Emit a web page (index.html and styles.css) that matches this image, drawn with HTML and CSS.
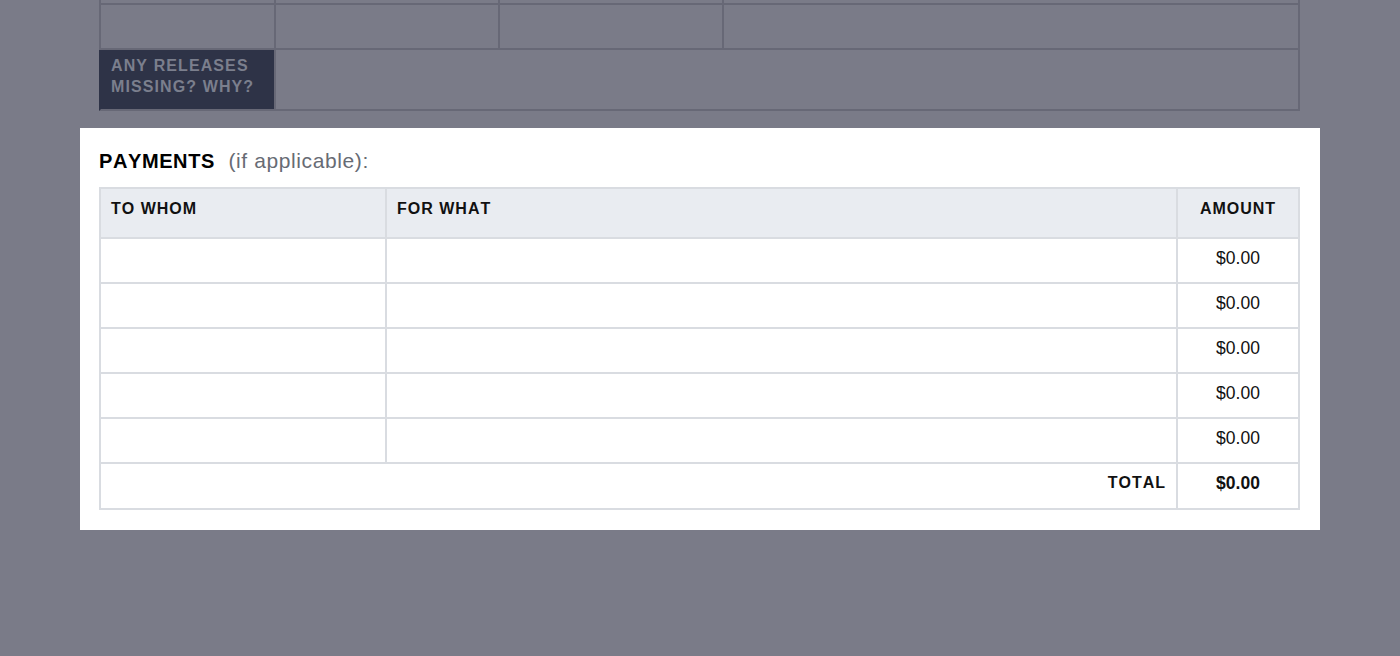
FILE: index.html
```html
<!DOCTYPE html>
<html lang="en">
<head>
<meta charset="utf-8">
<title>Payments</title>
<link rel="stylesheet" href="styles.css">
</head>
<body>
<div class="page">
  <div class="prev">
    <table class="prev-table">
      <tr class="prev-row">
        <td class="pc1"></td><td class="pc2"></td><td class="pc3"></td><td class="pc4"></td>
      </tr>
      <tr class="prev-row">
        <td class="first"></td><td></td><td></td><td></td>
      </tr>
      <tr class="prev-note">
        <th class="prev-label">ANY RELEASES<br>MISSING? WHY?</th>
        <td colspan="3"></td>
      </tr>
    </table>
  </div>

  <section class="card">
    <h2 class="card-title"><strong class="title-main">PAYMENTS</strong> <span class="title-note">(if applicable):</span></h2>
    <table class="pay">
      <thead>
        <tr class="pay-head">
          <th class="c-who">TO WHOM</th>
          <th class="c-what">FOR WHAT</th>
          <th class="c-amt">AMOUNT</th>
        </tr>
      </thead>
      <tbody>
        <tr class="pay-row"><td class="first"></td><td></td><td class="amt">$0.00</td></tr>
        <tr class="pay-row"><td class="first"></td><td></td><td class="amt">$0.00</td></tr>
        <tr class="pay-row"><td class="first"></td><td></td><td class="amt">$0.00</td></tr>
        <tr class="pay-row"><td class="first"></td><td></td><td class="amt">$0.00</td></tr>
        <tr class="pay-row"><td class="first"></td><td></td><td class="amt">$0.00</td></tr>
        <tr class="pay-total">
          <td class="first total-label" colspan="2">TOTAL</td>
          <td class="amt total-amt">$0.00</td>
        </tr>
      </tbody>
    </table>
  </section>
</div>
</body>
</html>
```

FILE: styles.css
```css
html, body {
  margin: 0;
  padding: 0;
}

body {
  background: #7a7b88;
  font-family: "Liberation Sans", Arial, Helvetica, sans-serif;
  font-kerning: none;
  color: #000;
  height: 656px;
  overflow: hidden;
}

.page {
  width: 1240px;
  margin-left: 80px;
}

/* dimmed section behind overlay */
.prev {
  padding: 0 20px 0 19px;
}

.prev-table {
  width: 1201px;
  table-layout: fixed;
  border-collapse: separate;
  border-spacing: 0;
  margin-top: -40px;
}

.prev-table td,
.prev-table th {
  box-sizing: border-box;
  padding: 0;
  border-right: 2px solid #676876;
  border-bottom: 2px solid #676876;
}

.prev-table tr:first-child td {
  border-top: 2px solid #676876;
}

.prev-table .pc1 { width: 177px; border-left: 2px solid #676876; }
.prev-table .pc2 { width: 224px; }
.prev-table .pc3 { width: 224px; }
.prev-table .pc4 { width: 576px; }
.prev-table .first { border-left: 2px solid #676876; }

.prev-row {
  height: 45px;
}

.prev-note {
  height: 61px;
}

.prev-label {
  background: #2e3347;
  color: #7b7f8d;
  border-left: 2px solid #2e3347;
  border-bottom-color: #2e3347;
  font-size: 16px;
  font-weight: bold;
  letter-spacing: 1.1px;
  line-height: 20.5px;
  text-align: left;
  vertical-align: top;
  padding: 6px 8px 0 10px !important;
}

/* card */
.card {
  background: #fff;
  margin-top: 17px;
  padding: 21px 20px 20px 19px;
}

.card-title {
  margin: 0 0 14px;
  font-size: 20px;
  line-height: 24px;
  font-weight: normal;
}

.title-main {
  font-weight: bold;
  letter-spacing: 0.6px;
  color: #000;
}

.title-note {
  font-size: 21px;
  letter-spacing: 0.6px;
  color: #676b74;
  margin-left: 8px;
}

.pay {
  width: 1201px;
  table-layout: fixed;
  border-collapse: separate;
  border-spacing: 0;
}

.pay th,
.pay td {
  box-sizing: border-box;
  border-right: 2px solid #d9dce1;
  border-bottom: 2px solid #d9dce1;
  padding: 0 10px;
  vertical-align: top;
}

.pay thead th {
  border-top: 2px solid #d9dce1;
  background: #e9ecf1;
  font-size: 16px;
  font-weight: bold;
  letter-spacing: 1px;
  line-height: 18px;
  text-align: left;
  padding-top: 11px;
  color: #111;
}

.pay .c-who { width: 288px; border-left: 2px solid #d9dce1; }
.pay .c-amt { width: 122px; text-align: center; }
.pay .first { border-left: 2px solid #d9dce1; }

.pay-head { height: 52px; }
.pay-row { height: 45px; }
.pay-total { height: 46px; }

.pay .amt {
  text-align: center;
  font-size: 17.5px;
  line-height: 20px;
  padding-top: 9px;
  color: #111;
}

.pay .total-label {
  text-align: right;
  font-size: 16px;
  font-weight: bold;
  letter-spacing: 1px;
  line-height: 20px;
  padding-top: 9px;
  padding-right: 10px;
  color: #111;
}

.pay .total-amt {
  font-weight: bold;
  padding-top: 9px;
}
```
